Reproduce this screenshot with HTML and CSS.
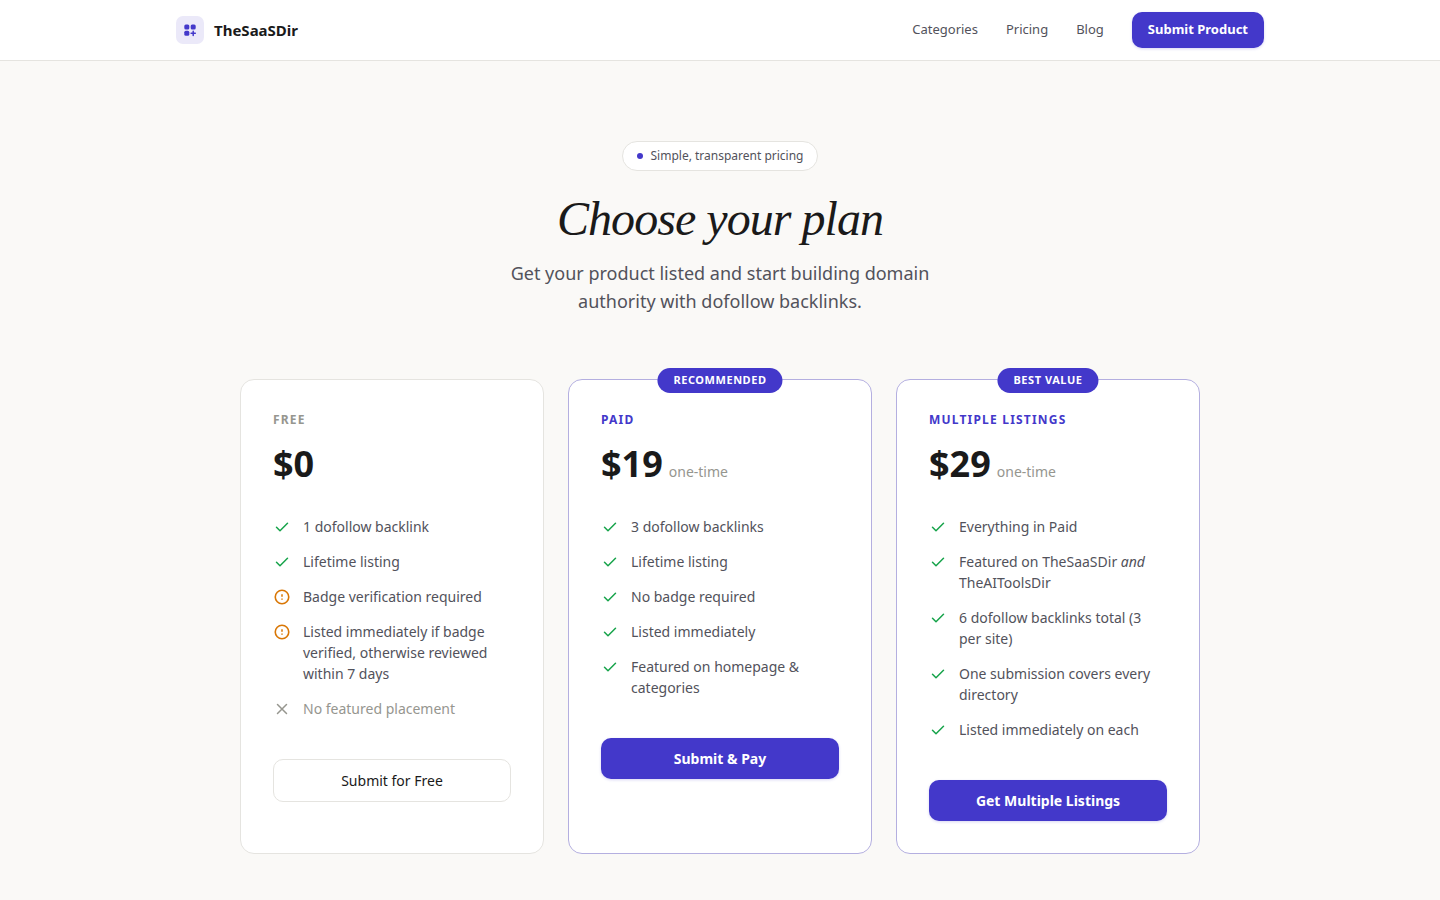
FILE: index.html
```html
<!DOCTYPE html>
<html lang="en">
<head>
<meta charset="utf-8">
<meta name="viewport" content="width=device-width, initial-scale=1">
<title>Pricing – TheSaaSDir</title>
<link rel="stylesheet" href="styles.css">
</head>
<body>
<svg class="sprite" aria-hidden="true">
  <symbol id="check" viewBox="0 0 18 18"><path d="M3.500 9.300 7 12.800l7.500-7.500" fill="none" stroke="currentColor" stroke-width="1.500" stroke-linecap="round" stroke-linejoin="round"/></symbol>
  <symbol id="alert" viewBox="0 0 18 18"><circle cx="9" cy="9" r="6.750" fill="none" stroke="currentColor" stroke-width="1.600"/><path d="M9 6.200v2.600M9 10.500v1.200" fill="none" stroke="currentColor" stroke-width="1.500"/></symbol>
  <symbol id="cross" viewBox="0 0 18 18"><path d="m4.500 4.500 9 9m0-9-9 9" fill="none" stroke="currentColor" stroke-width="1.500" stroke-linecap="round"/></symbol>
</svg>
<header class="site-header">
  <div class="header-inner">
    <a class="brand" href="#">
      <svg class="brand-mark" viewBox="0 0 28 28" aria-hidden="true">
        <rect width="28" height="28" rx="7" fill="#ebe9f9"/>
        <g fill="#4338ca"><rect x="8.300" y="8.500" width="5" height="5" rx="1.500"/><rect x="14.700" y="8.500" width="5" height="5" rx="1.500"/><rect x="8.300" y="14.800" width="5" height="5" rx="1.500"/></g>
        <path d="M17.200 15.200v4.200m-2.100-2.100h4.200" stroke="#4338ca" stroke-width="1.500" stroke-linecap="round"/>
      </svg>
      <span>TheSaaSDir</span>
    </a>
    <nav class="nav">
      <a href="#">Categories</a>
      <a href="#">Pricing</a>
      <a href="#">Blog</a>
      <a class="btn btn-primary btn-small" href="#">Submit Product</a>
    </nav>
  </div>
</header>
<main class="page">
  <section class="hero">
    <p class="pill"><span class="dot"></span>Simple, transparent pricing</p>
    <h1>Choose your plan</h1>
    <p class="lead">Get your product listed and start building domain authority with dofollow backlinks.</p>
  </section>
  <section class="plans">
    <article class="card">
      <h2 class="plan-name muted">Free</h2>
      <p class="price"><span class="amount">$0</span></p>
      <ul class="features">
        <li><svg class="icon ok"><use href="#check"/></svg><span>1 dofollow backlink</span></li>
        <li><svg class="icon ok"><use href="#check"/></svg><span>Lifetime listing</span></li>
        <li><svg class="icon warn"><use href="#alert"/></svg><span>Badge verification required</span></li>
        <li><svg class="icon warn"><use href="#alert"/></svg><span>Listed immediately if badge verified, otherwise reviewed within 7 days</span></li>
        <li class="muted"><svg class="icon"><use href="#cross"/></svg><span>No featured placement</span></li>
      </ul>
      <button class="btn btn-outline" type="button">Submit for Free</button>
    </article>
    <article class="card featured">
      <span class="ribbon">Recommended</span>
      <h2 class="plan-name">Paid</h2>
      <p class="price"><span class="amount">$19</span><span class="term">one-time</span></p>
      <ul class="features">
        <li><svg class="icon ok"><use href="#check"/></svg><span>3 dofollow backlinks</span></li>
        <li><svg class="icon ok"><use href="#check"/></svg><span>Lifetime listing</span></li>
        <li><svg class="icon ok"><use href="#check"/></svg><span>No badge required</span></li>
        <li><svg class="icon ok"><use href="#check"/></svg><span>Listed immediately</span></li>
        <li><svg class="icon ok"><use href="#check"/></svg><span>Featured on homepage &amp; categories</span></li>
      </ul>
      <button class="btn btn-primary" type="button">Submit &amp; Pay</button>
    </article>
    <article class="card featured">
      <span class="ribbon">Best value</span>
      <h2 class="plan-name">Multiple listings</h2>
      <p class="price"><span class="amount">$29</span><span class="term">one-time</span></p>
      <ul class="features">
        <li><svg class="icon ok"><use href="#check"/></svg><span>Everything in Paid</span></li>
        <li><svg class="icon ok"><use href="#check"/></svg><span>Featured on TheSaaSDir <em>and</em> TheAIToolsDir</span></li>
        <li><svg class="icon ok"><use href="#check"/></svg><span>6 dofollow backlinks total (3 per site)</span></li>
        <li><svg class="icon ok"><use href="#check"/></svg><span>One submission covers every directory</span></li>
        <li><svg class="icon ok"><use href="#check"/></svg><span>Listed immediately on each</span></li>
      </ul>
      <button class="btn btn-primary" type="button">Get Multiple Listings</button>
    </article>
  </section>
</main>
</body>
</html>
```

FILE: styles.css
```css
* { box-sizing: border-box; }
h1, h2, p, ul { margin: 0; padding: 0; }

body {
  margin: 0;
  background: #faf9f7;
  color: #1a1a1a;
  font-family: "Noto Sans", sans-serif;
  font-size: 14px;
  line-height: 21px;
}

a { color: inherit; text-decoration: none; }
.sprite { position: absolute; width: 0; height: 0; }

.site-header { background: #fff; border-bottom: 1px solid #e5e4e0; }
.header-inner {
  display: flex;
  align-items: center;
  justify-content: space-between;
  max-width: 1152px;
  margin: 0 auto;
  padding: 12px 32px;
}
.brand { display: flex; align-items: center; gap: 10px; font-size: 15px; font-weight: 700; }
.brand-mark { width: 28px; height: 28px; }
.nav { display: flex; align-items: baseline; gap: 28px; font-size: 13px; line-height: 18px; color: #52525b; }

.btn {
  display: block;
  width: 100%;
  padding: 10px 16px;
  border: 0;
  border-radius: 10px;
  font-family: inherit;
  font-size: 14px;
  line-height: 21px;
  text-align: center;
  cursor: pointer;
}
.btn-primary {
  background: #4338ca;
  color: #fff;
  font-weight: 700;
  box-shadow: 0 1px 3px rgba(67, 56, 202, 0.2);
}
.btn-outline { background: #fff; color: #1a1a1a; border: 1px solid #e5e4e0; font-weight: 400; }
.btn-small { width: auto; padding: 8px 16px 10px; font-size: 13px; line-height: 18px; }

.page { padding: 80px 32px 46px; }
.hero { display: flex; flex-direction: column; align-items: center; text-align: center; }
.pill {
  display: flex;
  align-items: center;
  gap: 8px;
  padding: 5px 14px;
  border: 1px solid #e5e4e0;
  border-radius: 15px;
  background: #fff;
  color: #52525b;
  font-size: 12px;
  line-height: 18px;
}
.dot { width: 6px; height: 6px; border-radius: 50%; background: #4338ca; }
h1 {
  margin-top: 20px;
  font-family: "Liberation Serif", serif;
  font-size: 48px;
  font-style: italic;
  font-weight: 400;
  line-height: 56px;
  letter-spacing: -0.02em;
}
.lead { max-width: 448px; margin-top: 12px; color: #52525b; font-size: 18px; line-height: 28px; }

.plans {
  display: grid;
  grid-template-columns: repeat(3, 1fr);
  gap: 24px;
  max-width: 960px;
  margin: 64px auto 0;
}
.card {
  position: relative;
  padding: 32px;
  border: 1px solid #e5e4e0;
  border-radius: 14px;
  background: #fff;
}
.featured { border-color: #b4afe0; }
.ribbon {
  position: absolute;
  top: -12px;
  left: 50%;
  transform: translateX(-50%);
  padding: 4px 16px 6px;
  border-radius: 13px;
  background: #4338ca;
  color: #fff;
  font-size: 11px;
  font-weight: 700;
  line-height: 15px;
  letter-spacing: 0.05em;
  text-transform: uppercase;
  white-space: nowrap;
}
.plan-name {
  color: #4338ca;
  font-size: 12px;
  font-weight: 700;
  line-height: 16px;
  letter-spacing: 0.1em;
  text-transform: uppercase;
}
.price { display: flex; align-items: baseline; gap: 6px; margin-top: 14px; }
.amount { font-size: 36px; font-weight: 700; line-height: 44px; }
.term { color: #96968f; }
.features {
  display: flex;
  flex-direction: column;
  gap: 14px;
  margin: 30px 0 40px;
  color: #52525b;
  list-style: none;
}
.features li { display: flex; gap: 12px; }
.icon { flex: none; width: 18px; height: 18px; margin-top: 2px; }
.ok { color: #16a34a; }
.warn { color: #d97706; }
.muted, .features .muted { color: #96968f; }
```
